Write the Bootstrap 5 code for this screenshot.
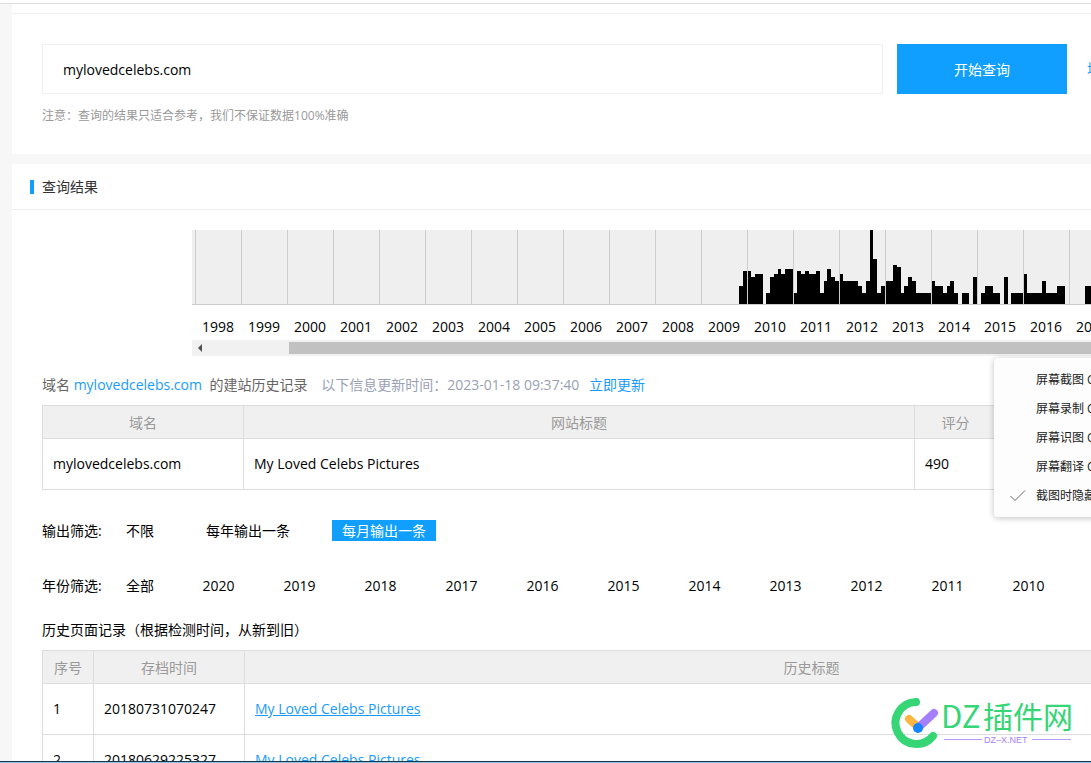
<!DOCTYPE html>
<html lang="zh-CN">
<head>
<meta charset="utf-8">
<meta name="viewport" content="width=device-width, initial-scale=1">
<title>建站历史查询</title>
<link href="https://cdn.jsdelivr.net/npm/bootstrap@5.3.0/dist/css/bootstrap.min.css" rel="stylesheet">
<style>
  body { font: 14px/20px "Open Sans", "Noto Sans CJK SC", sans-serif; color: #000; background: #f7f7f7; }
  a { color: #1a9bfb; }
  .page-main { min-width: 1397px; padding-left: 12px; }
  .top-rule { border-top: 1px solid #ddd; margin-top: 3px; }
  .tab-strip { height: 10px; border-bottom: 1px solid #eee; }
  .search-box { padding: 30px 30px 28px; margin-bottom: 10px; }
  .domain-input { width: 841px; height: 50px; padding: 0 20px; border: 1px solid #eee; border-radius: 0; color: #000; font-size: 14px; }
  .query-btn { width: 170px; height: 50px; margin: 0 20px 0 14px; border: 0; border-radius: 0; background: #109fff; color: #fff; font-size: 14px; }
  .note { margin: 12px 0 0; font-size: 12px; color: #999; }
  /* full-width punctuation centred in its cell */
  .mid-punct { font-family: "Noto Sans CJK TC", sans-serif; line-height: 1; }
  .section-head { height: 46px; padding-left: 18px; border-bottom: 1px solid #eee; }
  .section-head h2 { margin: 0; font-size: 14px; line-height: 20px; font-weight: 400; color: #333; }
  .head-bar { width: 4px; height: 14px; margin-right: 8px; background: #109fff; }
  .result-body { padding: 20px 18px 0 30px; }
  .timeline { margin-left: 150px; }
  .timeline svg { display: block; }
  .plot { width: 1200px; }
  .year-row { height: 35px; padding-left: 3px; }
  .year-row span { flex: 0 0 46px; text-align: center; }
  .scroll-track { height: 16px; background: #f1f1f1; padding: 2px 0 2px 6px; }
  .scroll-thumb { height: 12px; margin-left: 87px; background: #c1c1c1; }
  .info-line { margin: 0; padding: 19px 0 10px; color: #666; }
  .info-line a { margin-right: 4px; }
  .updated { margin: 0 6px 0 10px; color: #99a1b5; }
  .data-table { width: 100%; margin: 0; table-layout: fixed; border-color: #ddd; color: #000; }
  .data-table th, .data-table td { border: 1px solid #ddd; padding: 0 10px; vertical-align: middle; }
  .data-table th { height: 33px; background: #f0f0f0; color: #999; font-weight: 400; text-align: center; padding-top: 2px; }
  .data-table td { height: 51px; }
  .filter-row { height: 21px; margin-top: 30px; }
  .filter-row + .filter-row { margin-top: 34px; }
  .filter-label { flex: 0 0 74px; }
  .filter-row a { padding: 0 10px; color: #000; text-decoration: none; text-align: center; line-height: 21px; }
  .filter-row a.picked { background: #109fff; color: #fff; }
  .by-output { gap: 32px; }
  .by-year { gap: 28px; }
  .by-year a + a { width: 53px; }
  .list-title { margin: 0; padding: 24px 0 10px; font-size: 14px; line-height: 20px; font-weight: 400; }
  .capture-menu { top: 358px; right: -84px; width: 181px; padding: 7px 0; border: 0; border-radius: 4px; background: #fdfdfd; box-shadow: 0 1px 6px rgba(0,0,0,.25); font-size: 12px; }
  .capture-menu .dropdown-item { height: 29px; padding: 0 0 0 16px; line-height: 29px; color: #222; overflow: hidden; }
  .tick { width: 26px; height: 29px; flex: none; }
  .watermark { right: 14px; bottom: 12px; width: 190px; height: 56px; }
  .taskbar-edge { height: 2px; background: #8fc3e6; border-top: 1px solid #12384f; }
</style>
</head>
<body>
<div class="vh-100 d-flex flex-column overflow-hidden position-relative">
  <div class="bg-white flex-shrink-0"><div class="top-rule"></div></div>
  <main class="page-main flex-fill overflow-hidden">
    <section class="bg-white">
      <div class="tab-strip"></div>
      <form class="search-box" onsubmit="return false">
        <div class="d-flex align-items-center">
          <input class="form-control domain-input" type="text" value="mylovedcelebs.com" aria-label="域名">
          <button class="btn query-btn" type="submit">开始查询</button>
          <a class="text-decoration-none" href="#">增加查询</a>
        </div>
        <p class="note">注意<span class="mid-punct">：</span>查询的结果只适合参考<span class="mid-punct">，</span>我们不保证数据100%准确</p>
      </form>
    </section>

    <section class="bg-white">
      <div class="section-head d-flex align-items-center"><span class="head-bar"></span><h2>查询结果</h2></div>
      <div class="result-body">
        <div class="timeline overflow-hidden">
          <svg class="plot" viewBox="192 0 1200 75" width="1200" height="75" shape-rendering="crispEdges" role="img" aria-label="历史存档数量">
            <defs><pattern id="years" x="195" y="0" width="46" height="75" patternUnits="userSpaceOnUse"><rect width="1" height="75" fill="#ccc"/></pattern></defs>
            <rect x="192" width="1200" height="75" fill="#efefef"/>
            <path d="M739 74V56H743V41H751V47H755V44H763V74Z
              M766 74V63H770V47H774V44H778V39H781V44H785V39H793V63H797V41H801V44H805V41H809V44H816V41H820V63H824V51H827V39H831V47H835V51H839V44H843V51H858V56H862V63H866V51H870V0H873V29H877V63H881V56H885V51H893V35H897V37H901V63H904V56H908V47H912V51H916V63H931V51H935V56H943V63H947V56H950V51H954V63H958V74Z
              M962 74V63H969V74Z M973 74V47H977V74Z
              M981 74V63H985V56H993V63H1000V74Z M1004 74V47H1008V74Z
              M1011 74V63H1023V44H1027V63H1042V51H1046V63H1057V56H1065V74Z
              M1085 74V56H1100V63H1115V74Z"/>
            <rect x="192" width="1200" height="75" fill="url(#years)"/>
            <rect x="192" y="74" width="1200" height="1" fill="#ccc"/>
          </svg>
          <div class="year-row d-flex align-items-center pt-2">
            <span>1998</span><span>1999</span><span>2000</span><span>2001</span><span>2002</span><span>2003</span><span>2004</span><span>2005</span><span>2006</span><span>2007</span><span>2008</span><span>2009</span><span>2010</span><span>2011</span><span>2012</span><span>2013</span><span>2014</span><span>2015</span><span>2016</span><span>2017</span>
          </div>
          <div class="scroll-track d-flex align-items-center">
            <svg width="4" height="8" viewBox="0 0 4 8"><path d="M4 0V8L0 4Z" fill="#505050"/></svg>
            <div class="scroll-thumb flex-fill"></div>
          </div>
        </div>

        <p class="info-line">域名 <a class="text-decoration-none" href="#">mylovedcelebs.com</a> 的建站历史记录 <span class="updated">以下信息更新时间<span class="mid-punct">：</span>2023-01-18 09:37:40</span> <a class="text-decoration-none" href="#">立即更新</a></p>

        <table class="table data-table">
          <colgroup><col style="width:201px"><col style="width:671px"><col style="width:82px"><col></colgroup>
          <thead><tr><th>域名</th><th>网站标题</th><th>评分</th><th></th></tr></thead>
          <tbody><tr><td>mylovedcelebs.com</td><td>My Loved Celebs Pictures</td><td>490</td><td></td></tr></tbody>
        </table>

        <nav class="d-flex filter-row align-items-center" aria-label="输出筛选">
          <span class="filter-label">输出筛选:</span>
          <div class="d-flex by-output"><a href="#">不限</a><a href="#">每年输出一条</a><a class="picked" href="#">每月输出一条</a></div>
        </nav>
        <nav class="d-flex filter-row align-items-center" aria-label="年份筛选">
          <span class="filter-label">年份筛选:</span>
          <div class="d-flex by-year"><a href="#">全部</a><a href="#">2020</a><a href="#">2019</a><a href="#">2018</a><a href="#">2017</a><a href="#">2016</a><a href="#">2015</a><a href="#">2014</a><a href="#">2013</a><a href="#">2012</a><a href="#">2011</a><a href="#">2010</a></div>
        </nav>

        <h3 class="list-title">历史页面记录<span class="mid-punct">（</span>根据检测时间<span class="mid-punct">，</span>从新到旧<span class="mid-punct">）</span></h3>
        <table class="table data-table">
          <colgroup><col style="width:51px"><col style="width:151px"><col></colgroup>
          <thead><tr><th>序号</th><th>存档时间</th><th>历史标题</th></tr></thead>
          <tbody>
            <tr><td>1</td><td>20180731070247</td><td><a href="#">My Loved Celebs Pictures</a></td></tr>
            <tr><td>2</td><td>20180629225327</td><td><a href="#">My Loved Celebs Pictures</a></td></tr>
          </tbody>
        </table>
      </div>
    </section>
  </main>
  <div class="taskbar-edge flex-shrink-0"></div>

  <div class="dropdown-menu show capture-menu position-absolute">
    <button class="dropdown-item d-flex" type="button"><span class="tick"></span>屏幕截图 Ctrl+Alt+A</button>
    <button class="dropdown-item d-flex" type="button"><span class="tick"></span>屏幕录制 Ctrl+Alt+S</button>
    <button class="dropdown-item d-flex" type="button"><span class="tick"></span>屏幕识图 Ctrl+Alt+O</button>
    <button class="dropdown-item d-flex" type="button"><span class="tick"></span>屏幕翻译 Ctrl+Alt+F</button>
    <button class="dropdown-item d-flex" type="button"><svg class="tick" viewBox="0 0 26 29" fill="none" stroke="#666"><path d="M0.5 15L5 19.5L15 9.5"/></svg>截图时隐藏当前窗口</button>
  </div>

  <svg class="watermark position-absolute" viewBox="887 695 190 56" role="img" aria-label="DZ插件网">
    <path d="M916 702A21 21 0 1 0 933 736" fill="none" stroke="#36d576" stroke-width="8" stroke-linecap="round"/>
    <path d="M909 719L918 727" stroke="#ffb53e" stroke-width="8" stroke-linecap="round"/>
    <path d="M919 727L934 713" stroke="#a67fff" stroke-width="8" stroke-linecap="round"/>
    <circle cx="918" cy="728" r="5" fill="#1485ff"/>
    <g fill="#36d576" font-family="'Noto Sans CJK SC',sans-serif">
      <text x="941" y="728" font-size="31">DZ</text>
      <text x="983" y="728" font-size="30">插件网</text>
    </g>
    <path d="M944 739.500H982M1032 739.500H1071" stroke="#b99bff"/>
    <text x="984" y="743" font-size="9" fill="#a67fff" font-family="'Liberation Sans',sans-serif">DZ–X.NET</text>
  </svg>
</div>
<script src="https://cdn.jsdelivr.net/npm/bootstrap@5.3.0/dist/js/bootstrap.bundle.min.js"></script>
</body>
</html>
